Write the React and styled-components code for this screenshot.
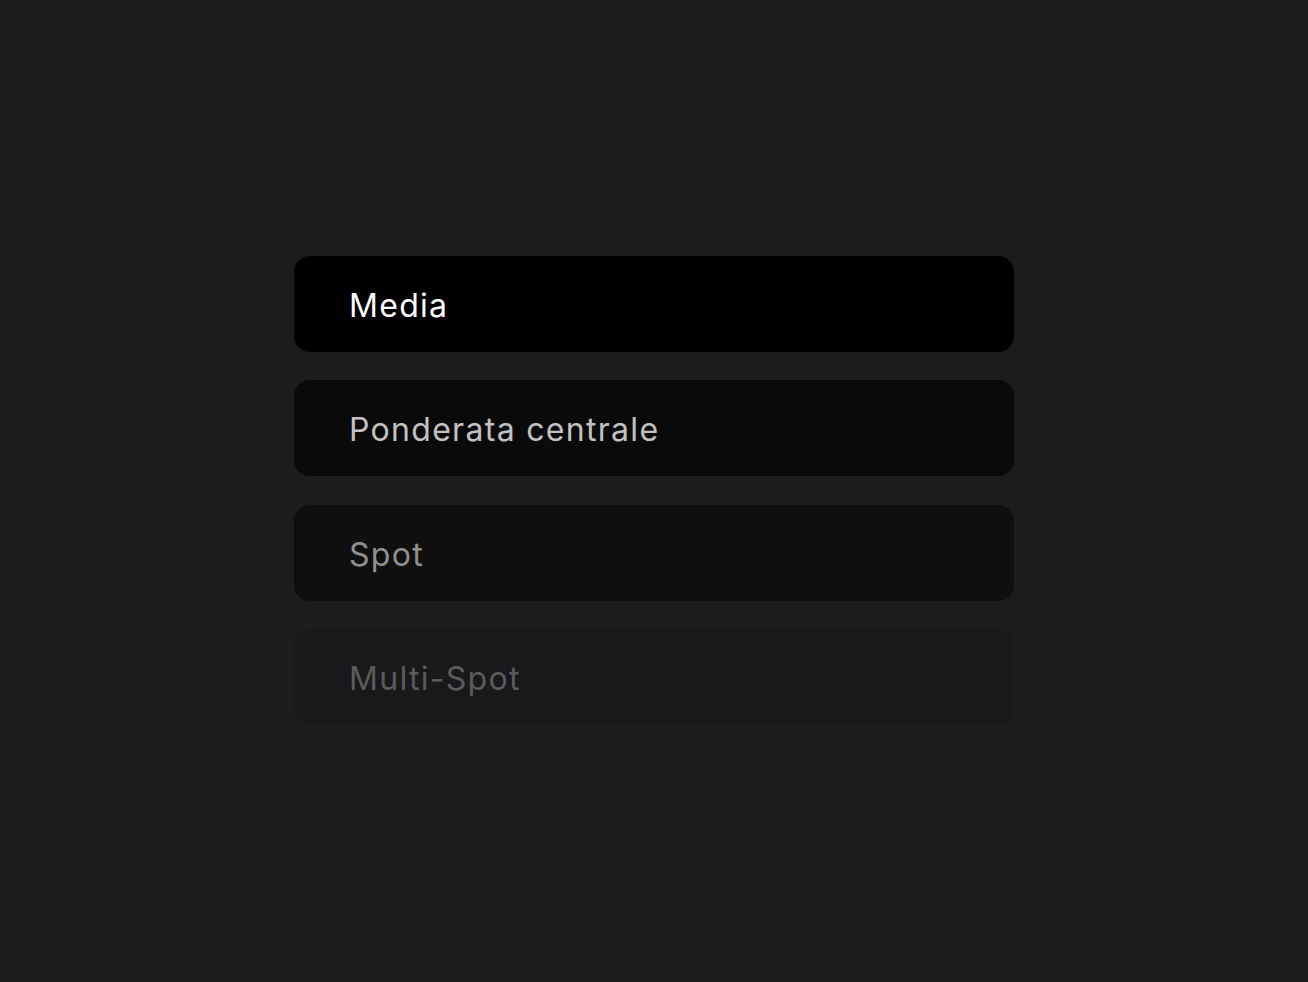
import { createGlobalStyle, styled } from "styled-components";

const GlobalStyle = createGlobalStyle`
  html, body {
    margin: 0;
    padding: 0;
    background: #1c1c1e;
  }
  body {
    font-family: Inter, "Noto Sans", "Liberation Sans", sans-serif;
    -webkit-font-smoothing: antialiased;
  }
`

const modes = [
  { label: 'Media', bg: '#000000', color: '#ffffff' },
  { label: 'Ponderata centrale', bg: '#0a0a0a', color: '#c2c2c2' },
  { label: 'Spot', bg: '#0f0f10', color: '#8f8f90' },
  { label: 'Multi-Spot', bg: '#19191b', color: '#5b5b5e' },
]

const App = () => {
  return (
    <>
      <GlobalStyle />
      <Page>
        <List>
          {modes.map((m) => (
            <Option key={m.label} $bg={m.bg} $color={m.color}>
              {m.label}
            </Option>
          ))}
        </List>
      </Page>
    </>
  );
};
export default App;

const Page = styled.div`
  width: 1308px;
  height: 982px;
  display: flex;
  justify-content: center;
  padding-top: 256px;
  box-sizing: border-box;
`

const List = styled.div`
  width: 720px;
  display: flex;
  flex-direction: column;
  gap: 28.4px;
`

const Option = styled.div`
  height: 96px;
  border-radius: 16px;
  background: ${(p) => p.$bg};
  color: ${(p) => p.$color};
  display: flex;
  align-items: center;
  padding: 3px 0 0 55px;
  font-size: 32px;
  letter-spacing: 1.3px;
  box-sizing: border-box;
`
